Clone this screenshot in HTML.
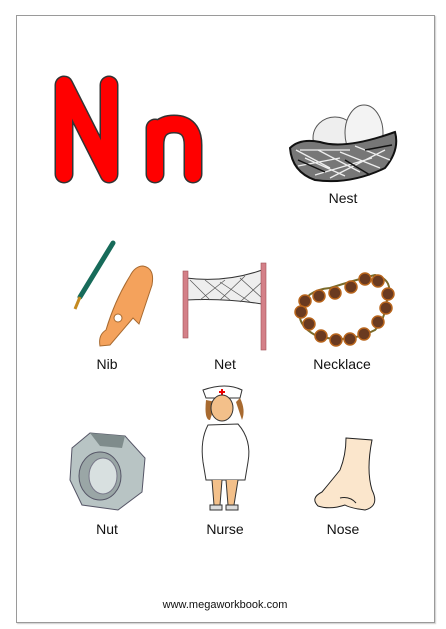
<!DOCTYPE html>
<html><head><style>
body{margin:0;width:446px;height:629px;background:#fff;position:relative;overflow:hidden;font-family:"Comic Sans MS","Liberation Sans",sans-serif}
.frame{position:absolute;left:16px;top:15px;width:417px;height:606px;border:1px solid #9a9a9a;box-shadow:1px 1px 1px #ccc}
.l{position:absolute;font-size:14px;color:#111;transform:translateX(-50%);white-space:nowrap}
svg{position:absolute;left:0;top:0}
</style></head><body>
<div class="frame"></div>
<svg width="446" height="629">
 <g fill="none" stroke-linecap="round" stroke-linejoin="round">
  <path d="M64 174V85L109 174V85" stroke="#333" stroke-width="19"/>
  <path d="M64 174V85L109 174V85" stroke="#f00" stroke-width="16"/>
  <path d="M155 174V145Q155 124 174 124Q193 124 193 145V174M155 174V128" stroke="#333" stroke-width="19"/>
  <path d="M155 174V145Q155 124 174 124Q193 124 193 145V174M155 174V128" stroke="#f00" stroke-width="16"/>
 </g>
 <!-- nest -->
 <ellipse cx="335" cy="138" rx="22" ry="21" fill="#eee" stroke="#555"/>
 <ellipse cx="364" cy="133" rx="19" ry="28" fill="#f3f3f3" stroke="#555"/>
 <path d="M290 148Q300 138 320 142Q345 150 395 132Q400 150 385 168Q350 185 315 180Q292 172 290 148Z" fill="#777" stroke="#111" stroke-width="2"/>
 <path d="M296 150L330 168M305 158L345 176M318 150L360 172M340 152L380 168M355 146L390 160M298 166L340 158M315 175L372 158M330 178L385 150M300 150L350 150" stroke="#eee" stroke-width="1.3"/>
 <path d="M298 160L325 172M345 160L370 175M365 150L392 145" stroke="#111" stroke-width="1.5"/>
 <!-- pen -->
 <path d="M113 243L80 297" stroke="#176b5a" stroke-width="5" stroke-linecap="round"/>
 <path d="M80 297L75 309" stroke="#c58a20" stroke-width="3"/>
 <!-- nib -->
 <path d="M143 266Q155 268 152 285L139 324L133 318L110 345L100 346Q98 335 106 330Q115 300 130 276Q135 266 143 266Z" fill="#f4a25c" stroke="#a86a30"/>
 <circle cx="118" cy="318" r="4" fill="#fff" stroke="#a86a30"/>
 <!-- net -->
 <path d="M186 278Q225 283 262 270V304Q225 298 186 300Z" fill="#eee" stroke="#333"/>
 <path d="M190 280L210 300M205 280L230 300M220 282L250 302M240 278L262 298M200 300L225 280M220 300L245 276M240 302L262 282" stroke="#555" stroke-width=".7"/>
 <rect x="183" y="271" width="5" height="67" fill="#d48088" stroke="#a05058" stroke-width=".6"/>
 <rect x="261" y="263" width="5" height="87" fill="#d48088" stroke="#a05058" stroke-width=".6"/>
 <!-- necklace -->
 <path d="M300 310Q305 290 330 288Q355 280 375 275Q395 280 387 300Q385 320 375 330Q345 345 315 335Q297 325 300 310Z" fill="none" stroke="#7a6a2a" stroke-width="2"/>
 <g fill="#6a3a20" stroke="#b8651c" stroke-width="1.5">
  <circle cx="305" cy="301" r="6"/><circle cx="319" cy="296" r="6"/><circle cx="335" cy="293" r="6"/><circle cx="351" cy="287" r="6"/><circle cx="365" cy="279" r="6"/><circle cx="378" cy="281" r="6"/><circle cx="388" cy="294" r="6"/><circle cx="386" cy="308" r="6"/><circle cx="378" cy="322" r="6"/><circle cx="364" cy="334" r="6"/><circle cx="350" cy="339" r="6"/><circle cx="336" cy="340" r="6"/><circle cx="321" cy="336" r="6"/><circle cx="309" cy="324" r="6"/><circle cx="301" cy="312" r="6"/>
 </g>
 <!-- nurse -->
 <path d="M203 390Q226 382 242 390L240 398H206Z" fill="#fff" stroke="#333"/>
 <path d="M219 392h6M222 389v6" stroke="#e00" stroke-width="2"/>
 <path d="M206 400Q204 420 210 420L216 402Z M236 402L242 420Q246 410 240 398Z" fill="#a86a30"/>
 <ellipse cx="222" cy="408" rx="11" ry="13" fill="#f3c08a" stroke="#333"/>
 <path d="M208 425L238 424Q252 440 248 462L245 480H206L203 462Q200 440 208 425Z" fill="#fff" stroke="#333"/>
 <path d="M212 480L214 505H220L222 480M226 480L228 505H234L238 480" fill="#f3c08a" stroke="#333"/>
 <path d="M210 505h12v5h-12zM226 505h12v5h-12z" fill="#ddd" stroke="#333"/>
 <!-- nut -->
 <path d="M90 433L125 436L145 458L142 492L118 510L82 505L70 480L72 448Z" fill="#b8c4c4" stroke="#556"/>
 <path d="M90 433L125 436L122 448L100 446Z" fill="#7f8c8c"/>
 <ellipse cx="100" cy="476" rx="21" ry="24" fill="#9aa6a6" stroke="#556"/>
 <ellipse cx="103" cy="476" rx="14" ry="18" fill="#d8e0e0" stroke="#778"/>
 <!-- nose -->
 <path d="M346 438L372 440Q366 470 372 490Q380 506 365 510Q350 508 345 505Q330 510 318 506Q310 498 322 492Q332 480 340 470Q346 455 346 438Z" fill="#fbe6cc" stroke="#222"/>
 <path d="M340 498Q350 496 356 503" stroke="#222" fill="none"/>
</svg>
<div class="l" style="left:343px;top:190px">Nest</div>
<div class="l" style="left:107px;top:356px">Nib</div>
<div class="l" style="left:225px;top:356px">Net</div>
<div class="l" style="left:342px;top:356px">Necklace</div>
<div class="l" style="left:107px;top:521px">Nut</div>
<div class="l" style="left:225px;top:521px">Nurse</div>
<div class="l" style="left:343px;top:521px">Nose</div>
<div class="l" style="left:225px;top:599px;font-size:11px">www.megaworkbook.com</div>
</body></html>
